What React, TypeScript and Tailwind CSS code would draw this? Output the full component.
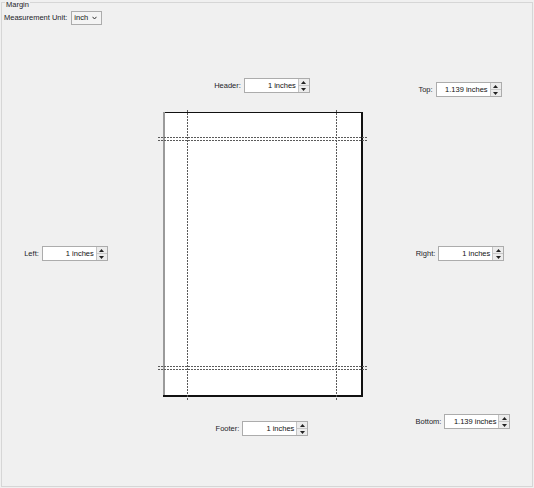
import React from 'react';

const font = { fontFamily: '"Liberation Sans", Arial, sans-serif' };

function Spinner({ label, value }: { label: string; value: string }) {
  return (
    <div className="flex items-center gap-[3px] h-[15px]">
      <span className="text-[7.5px] leading-none text-[#1c1c28]">{label}</span>
      <div className="flex w-[66px] h-[15px] border border-[#acacac] bg-white">
        <span className="flex-1 flex items-center justify-end pr-[2px] text-[7.5px] leading-none text-[#111]">
          {value}
        </span>
        <div className="w-[11px] flex flex-col border-l border-[#c4c4c4] bg-[#ececec]">
          <div className="flex-1 flex items-center justify-center border-b border-[#c8c8c8]">
            <svg width="5" height="3" viewBox="0 0 5 3">
              <path d="M2.5 0 L5 3 L0 3 Z" fill="#222" />
            </svg>
          </div>
          <div className="flex-1 flex items-center justify-center">
            <svg width="5" height="3" viewBox="0 0 5 3">
              <path d="M0 0 L5 0 L2.5 3 Z" fill="#222" />
            </svg>
          </div>
        </div>
      </div>
    </div>
  );
}

function PagePreview() {
  return (
    <svg width="211" height="293" viewBox="0 0 211 293" shapeRendering="crispEdges">
      <rect x="6" y="4" width="200" height="285" fill="#ffffff" />
      <rect x="6" y="4" width="200" height="1" fill="#111" />
      <rect x="6" y="4" width="2" height="285" fill="#9a9a9a" />
      <rect x="204" y="4" width="2" height="285" fill="#111" />
      <rect x="6" y="287" width="200" height="2" fill="#111" />
      <g stroke="#5a5a5a" strokeWidth="1" strokeDasharray="2 1">
        <line x1="30.5" y1="2" x2="30.5" y2="292" />
        <line x1="179.5" y1="2" x2="179.5" y2="292" />
        <line x1="1" y1="29.5" x2="210" y2="29.5" />
        <line x1="1" y1="32.5" x2="210" y2="32.5" />
        <line x1="1" y1="258.5" x2="210" y2="258.5" />
        <line x1="1" y1="261.5" x2="210" y2="261.5" />
      </g>
    </svg>
  );
}

export default function App() {
  return (
    <div className="w-[534px] h-[488px] bg-[#f0f0f0] overflow-hidden pt-[2px] pl-[1px]" style={font}>
      <div className="relative w-[532px] h-[485px] border border-[#d6d6d6]">
        <span className="absolute left-[3px] top-[-3px] px-[1px] bg-[#f0f0f0] text-[7.5px] leading-[9px] text-[#1c1c28]">
          Margin
        </span>

        <div className="flex items-center gap-[4px] mt-[8px] pl-[2px] h-[14px]">
          <span className="text-[7.5px] leading-none text-[#1c1c28]">Measurement Unit:</span>
          <div className="flex items-center w-[31px] h-[14px] border border-[#acacac] bg-[#f4f4f4] pl-[2px] pr-[4px]">
            <span className="flex-1 text-[7.5px] leading-none text-[#111]">inch</span>
            <svg width="5" height="4" viewBox="0 0 5 4">
              <path d="M0.5 0.8 L2.5 3 L4.5 0.8" fill="none" stroke="#333" strokeWidth="1" />
            </svg>
          </div>
        </div>

        <div className="flex">
          <div className="w-[125px] flex flex-col items-center">
            <div className="mt-[221px] ml-[3px]">
              <Spinner label="Left:" value="1 inches" />
            </div>
          </div>

          <div className="w-[270px] flex flex-col items-center">
            <div className="mt-[53px]">
              <Spinner label="Header:" value="1 inches" />
            </div>
            <div className="mt-[15px]">
              <PagePreview />
            </div>
            <div className="mt-[20px]">
              <Spinner label="Footer:" value="1 inches" />
            </div>
          </div>

          <div className="w-[126px] flex flex-col items-center">
            <div className="mt-[57px]">
              <Spinner label="Top:" value="1.139 inches" />
            </div>
            <div className="mt-[149px]">
              <Spinner label="Right:" value="1 inches" />
            </div>
            <div className="mt-[153px] ml-[6px]">
              <Spinner label="Bottom:" value="1.139 inches" />
            </div>
          </div>
        </div>
      </div>
    </div>
  );
}
